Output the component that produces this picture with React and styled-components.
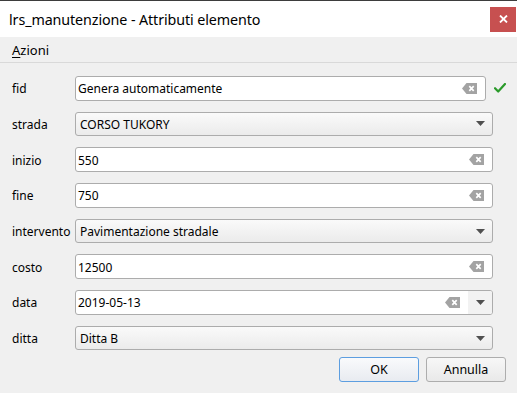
import React from 'react';
import styled, { createGlobalStyle } from 'styled-components';

const GlobalStyle = createGlobalStyle`
  html, body { margin: 0; padding: 0; background: #f0f0f0; }
  body { font-family: "Noto Sans", "Open Sans", sans-serif; color: #000; }
`;

const fields = [
  { label: 'fid', kind: 'line', value: 'Genera automaticamente', check: true },
  { label: 'strada', kind: 'combo', value: 'CORSO TUKORY' },
  { label: 'inizio', kind: 'line', value: '550' },
  { label: 'fine', kind: 'line', value: '750' },
  { label: 'intervento', kind: 'combo', value: 'Pavimentazione stradale' },
  { label: 'costo', kind: 'line', value: '12500' },
  { label: 'data', kind: 'date', value: '2019-05-13' },
  { label: 'ditta', kind: 'combo', value: 'Ditta B' },
];

const Window = styled.div`
  width: 517px;
  height: 393px;
  display: flex;
  flex-direction: column;
  background: #f0f0f0;
  border-top: 1px solid #3d3d3d;
  box-sizing: border-box;
  overflow: hidden;
`;

const TitleBar = styled.div`
  height: 36px;
  background: #fff;
  display: flex;
  align-items: center;
  justify-content: space-between;
  padding-left: 9px;
  padding-right: 1px;
`;

const Title = styled.span`
  font-size: 14.3px;
  letter-spacing: -0.1px;
`;

const CloseButton = styled.div`
  width: 26px;
  height: 25px;
  background: #c75050;
  display: flex;
  align-items: center;
  justify-content: center;
`;

const MenuBar = styled.div`
  height: 25px;
  display: flex;
  align-items: center;
  padding-left: 12px;
  border-bottom: 1px solid #d9d9d9;
  font-size: 13px;
`;

const Mnemonic = styled.span`
  text-decoration: underline;
  text-underline-offset: 2px;
`;

const Form = styled.div`
  display: flex;
  flex-direction: column;
  gap: 11.2px;
  padding: 13px 0 0 12px;
`;

const Row = styled.div`
  display: flex;
  align-items: center;
  height: 24.5px;
`;

const Label = styled.div`
  width: 63px;
  font-size: 12px;
  padding-top: 1px;
`;

const Field = styled.div`
  box-sizing: border-box;
  height: 100%;
  width: ${p => (p.$narrow ? '411px' : '418px')};
  border: 1px solid #acacac;
  border-radius: 3px;
  display: flex;
  align-items: center;
  font-size: 12px;
  overflow: hidden;
  background: ${p => (p.$combo ? 'linear-gradient(#fafafa, #ebebeb)' : '#fff')};
  padding-left: ${p => (p.$combo ? '4px' : '2px')};
`;

const Value = styled.span`
  flex: 1;
  white-space: nowrap;
  padding-top: 1px;
`;

const ClearSlot = styled.span`
  display: flex;
  margin-right: 8px;
`;

const ArrowSlot = styled.span`
  display: flex;
  align-items: center;
  justify-content: center;
  width: 24px;
  height: 100%;
  background: ${p => (p.$boxed ? '#f2f2f2' : 'transparent')};
`;

const CheckSlot = styled.span`
  display: flex;
  margin-left: 8px;
`;

const Footer = styled.div`
  display: flex;
  justify-content: flex-end;
  gap: 7px;
  padding: 7px 11px 0 0;
`;

const Button = styled.div`
  box-sizing: border-box;
  width: 80px;
  height: 25px;
  border: 1px solid ${p => (p.$default ? '#5d9ee0' : '#adadad')};
  border-radius: 3px;
  background: ${p => (p.$default ? 'linear-gradient(#f9fafc, #e8ebf0)' : 'linear-gradient(#f7f7f7, #e9e9e9)')};
  display: flex;
  align-items: center;
  justify-content: center;
  font-size: 12.5px;
`;

const ClearIcon = () => (
  <svg width="15" height="11" viewBox="0 0 15 11">
    <polygon points="0,5.5 4.5,0 15,0 15,11 4.5,11" fill="#a3a3a3" />
    <path d="M7.3 3.2 L11.7 7.8 M11.7 3.2 L7.3 7.8" stroke="#fff" strokeWidth="1.7" />
  </svg>
);

const ArrowIcon = () => (
  <svg width="9" height="5" viewBox="0 0 9 5">
    <polygon points="0,0 9,0 4.5,5" fill="#505050" />
  </svg>
);

const CheckIcon = () => (
  <svg width="12" height="10" viewBox="0 0 12 10">
    <path d="M1 5.2 L4.2 8.5 L11 1" fill="none" stroke="#2a9a2a" strokeWidth="2.2" strokeLinecap="round" strokeLinejoin="round" />
  </svg>
);

const CloseIcon = () => (
  <svg width="9" height="8" viewBox="0 0 9 8">
    <path d="M1 0.5 L8 7.5 M8 0.5 L1 7.5" stroke="#fff" strokeWidth="1.8" />
  </svg>
);

const FieldRow = ({ field }) => (
  <Row>
    <Label>{field.label}</Label>
    <Field $combo={field.kind === 'combo'} $narrow={field.check}>
      <Value>{field.value}</Value>
      {field.kind === 'line' && (
        <ClearSlot>
          <ClearIcon />
        </ClearSlot>
      )}
      {field.kind === 'date' && (
        <>
          <ClearSlot>
            <ClearIcon />
          </ClearSlot>
          <ArrowSlot $boxed>
            <ArrowIcon />
          </ArrowSlot>
        </>
      )}
      {field.kind === 'combo' && (
        <ArrowSlot>
          <ArrowIcon />
        </ArrowSlot>
      )}
    </Field>
    {field.check && (
      <CheckSlot>
        <CheckIcon />
      </CheckSlot>
    )}
  </Row>
);

export default function App() {
  return (
    <>
      <GlobalStyle />
      <Window>
        <TitleBar>
          <Title>lrs_manutenzione - Attributi elemento</Title>
          <CloseButton>
            <CloseIcon />
          </CloseButton>
        </TitleBar>
        <MenuBar>
          <span>
            <Mnemonic>A</Mnemonic>zioni
          </span>
        </MenuBar>
        <Form>
          {fields.map(f => (
            <FieldRow key={f.label} field={f} />
          ))}
        </Form>
        <Footer>
          <Button $default>OK</Button>
          <Button>Annulla</Button>
        </Footer>
      </Window>
    </>
  );
}
